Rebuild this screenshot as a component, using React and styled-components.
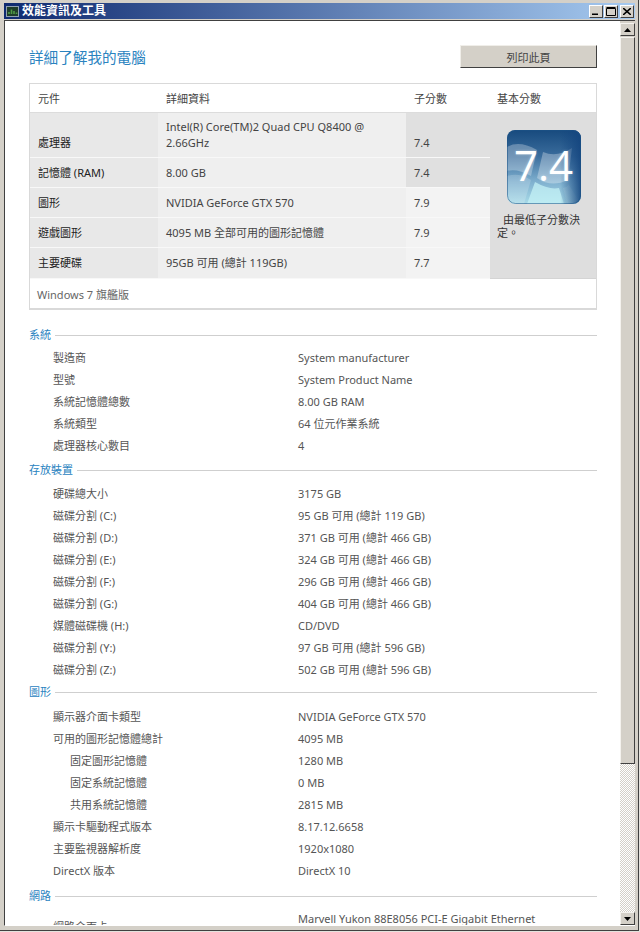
import React from 'react'
import styled, { createGlobalStyle } from 'styled-components'

const GlobalStyle = createGlobalStyle`
  html, body {
    margin: 0;
    padding: 0;
    background: #e4e2dd;
  }
  body {
    font-family: "Noto Sans", "Noto Sans CJK TC", sans-serif;
    font-size: 11px;
  }
`

const Window = styled.div`
  box-sizing: border-box;
  width: 639px;
  height: 931px;
  padding: 3px 3px 4px 4px;
  background: #d4d0c8;
  border-right: 1px solid #404040;
  border-bottom: 1px solid #404040;
  display: flex;
  flex-direction: column;
  overflow: hidden;
`

const TitleBar = styled.div`
  height: 16px;
  flex: none;
  padding: 0 1px 0 2px;
  margin-bottom: 1px;
  display: flex;
  align-items: center;
  gap: 3px;
  background: linear-gradient(90deg, #0f2a70 0%, #a6caf0 100%);
`

const Title = styled.span`
  flex: 1;
  color: #fff;
  font-size: 12px;
  font-weight: 700;
  line-height: 16px;
`

const WinButtons = styled.div`
  display: flex;
`

const WinButton = styled.button`
  box-sizing: border-box;
  width: 14px;
  height: 13px;
  padding: 0;
  margin-left: ${p => p.$gap || 0}px;
  background: #d4d0c8;
  border: 1px solid;
  border-color: #fff #404040 #404040 #fff;
  display: flex;
  align-items: center;
  justify-content: center;
`

const Main = styled.div`
  flex: 1;
  min-height: 0;
  display: flex;
  border-top: 1px solid #404040;
  border-left: 1px solid #404040;
  border-bottom: 1px solid #fff;
`

const Content = styled.div`
  flex: 1;
  min-width: 0;
  overflow: hidden;
  background: #fff;
  padding: 24px 23px 0 24px;
`

const HeaderRow = styled.div`
  display: flex;
  justify-content: space-between;
  align-items: center;
  height: 23px;
  margin-bottom: 15px;
`

const Heading = styled.h1`
  margin: 0 0 1px;
  color: #2a83bf;
  font-size: 14.6px;
  font-weight: 400;
`

const PrintButton = styled.button`
  box-sizing: border-box;
  width: 137px;
  height: 23px;
  padding: 0;
  background: #d4d0c8;
  color: #444;
  font-family: inherit;
  font-size: 11px;
  border: 1px solid;
  border-color: #f0eee9 #404040 #404040 #f0eee9;
`

const ScoreTable = styled.div`
  box-sizing: border-box;
  height: 227px;
  border: 1px solid #d9d9d9;
  border-width: 1px 1px 2px 1px;
  display: grid;
  grid-template-columns: 128px 248px 84px 1fr;
  grid-template-rows: 29px 45px 30px 30px 30px 31px 1fr;
`

const HeadCell = styled.div`
  padding-left: ${p => p.$pad || 8}px;
  display: flex;
  align-items: center;
  color: #444;
  border-bottom: 1px solid #dcdcdc;
`

const Cell = styled.div`
  box-sizing: border-box;
  padding: 0 8px;
  display: flex;
  align-items: center;
  line-height: 16px;
  color: ${p => (p.$strong ? '#222' : '#444')};
  background: ${p => p.$bg};
  border-bottom: 1px solid #f8f8f8;
`

const LabelCell = styled(Cell)`
  padding-top: ${p => p.$drop || 0}px;
`

const BaseCell = styled.div`
  grid-column: 4;
  grid-row: 2 / span 5;
  background: #dedede;
  border-bottom: 1px solid #d4d4d4;
  padding: 17px 6px 0 7px;
`

const Badge = styled.div`
  position: relative;
  width: 74px;
  height: 74px;
  margin-left: 10px;
`

const BadgeScore = styled.span`
  position: absolute;
  left: 7px;
  top: 10px;
  color: #fff;
  font-family: "Open Sans", sans-serif;
  font-weight: 400;
  font-size: 42px;
  line-height: 50px;
  text-shadow: 0 0 3px rgba(255, 255, 255, 0.35);
`

const BaseNote = styled.p`
  margin: 9px 0 0;
  color: #333;
  line-height: 13px;
  text-indent: 6px;
`

const Edition = styled.div`
  grid-column: 1 / -1;
  padding-left: 7px;
  display: flex;
  align-items: center;
  color: #666;
`

const Section = styled.section`
  margin-top: ${p => p.$top || 0}px;
`

const SectionTitle = styled.h2`
  margin: 0 0 ${p => p.$after || 5}px;
  display: flex;
  align-items: center;
  gap: 4px;
  height: 18px;
  color: #2a83bf;
  font-size: 11px;
  font-weight: 400;

  &::after {
    content: '';
    flex: 1;
    height: 1px;
    margin-top: 3px;
    background: #cfcfcf;
  }
`

const InfoRow = styled.div`
  box-sizing: border-box;
  display: grid;
  grid-template-columns: 269px 245px;
  padding: 3px 0;
  line-height: 16px;
  align-items: center;
  color: #555;
`

const InfoLabel = styled.span`
  padding-left: ${p => (p.$sub ? 41 : 24)}px;
`

const ScrollBar = styled.div`
  width: 15px;
  flex: none;
  padding-top: 2px;
  display: flex;
  flex-direction: column;
`

const ArrowButton = styled.div`
  box-sizing: border-box;
  height: 13px;
  flex: none;
  background: #d4d0c8;
  border: 1px solid;
  border-color: #f4f2ee #404040 #404040 #f4f2ee;
  display: flex;
  align-items: center;
  justify-content: center;
`

const Thumb = styled.div`
  box-sizing: border-box;
  height: 727px;
  margin-top: 1px;
  flex: none;
  background: #d4d0c8;
  border: 1px solid;
  border-color: #f4f2ee #404040 #404040 #f4f2ee;
`

const Track = styled.div`
  flex: 1;
  background-color: #fff;
  background-image: conic-gradient(#d4d0c8 25%, #fff 0 50%, #d4d0c8 0 75%, #fff 0);
  background-size: 2px 2px;
`

const AppIcon = () => (
  <svg width="13" height="11" viewBox="0 0 13 11">
    <rect x="0.5" y="0.5" width="12" height="10" fill="#1f3d2a" stroke="#8fa0b0" />
    <path d="M3 8V6M5.5 8V3.5M8 8V5M10.5 8V6.5" stroke="#4f9a45" strokeWidth="1.6" />
  </svg>
)

const Arrow = ({ up }) => (
  <svg width="7" height="4" viewBox="0 0 7 4">
    <path d={up ? 'M3.5 0L7 4H0Z' : 'M0 0H7L3.5 4Z'} fill="#000" />
  </svg>
)

const systemRows = [
  ['製造商', 'System manufacturer'],
  ['型號', 'System Product Name'],
  ['系統記憶體總數', '8.00 GB RAM'],
  ['系統類型', '64 位元作業系統'],
  ['處理器核心數目', '4'],
]

const storageRows = [
  ['硬碟總大小', '3175 GB'],
  ['磁碟分割 (C:)', '95 GB 可用 (總計 119 GB)'],
  ['磁碟分割 (D:)', '371 GB 可用 (總計 466 GB)'],
  ['磁碟分割 (E:)', '324 GB 可用 (總計 466 GB)'],
  ['磁碟分割 (F:)', '296 GB 可用 (總計 466 GB)'],
  ['磁碟分割 (G:)', '404 GB 可用 (總計 466 GB)'],
  ['媒體磁碟機 (H:)', 'CD/DVD'],
  ['磁碟分割 (Y:)', '97 GB 可用 (總計 596 GB)'],
  ['磁碟分割 (Z:)', '502 GB 可用 (總計 596 GB)'],
]

const graphicsRows = [
  ['顯示器介面卡類型', 'NVIDIA GeForce GTX 570'],
  ['可用的圖形記憶體總計', '4095 MB'],
  ['固定圖形記憶體', '1280 MB', true],
  ['固定系統記憶體', '0 MB', true],
  ['共用系統記憶體', '2815 MB', true],
  ['顯示卡驅動程式版本', '8.17.12.6658'],
  ['主要監視器解析度', '1920x1080'],
  ['DirectX 版本', 'DirectX 10'],
]

const networkRows = [
  ['網路介面卡', 'Marvell Yukon 88E8056 PCI-E Gigabit Ethernet Controller'],
]

const scores = [
  ['處理器', 'Intel(R) Core(TM)2 Quad CPU Q8400 @ 2.66GHz', '7.4', true],
  ['記憶體 (RAM)', '8.00 GB', '7.4', true],
  ['圖形', 'NVIDIA GeForce GTX 570', '7.9'],
  ['遊戲圖形', '4095 MB 全部可用的圖形記憶體', '7.9'],
  ['主要硬碟', '95GB 可用 (總計 119GB)', '7.7'],
]

const InfoSection = ({ title, rows, top, after }) => (
  <Section $top={top}>
    <SectionTitle $after={after}>{title}</SectionTitle>
    {rows.map(([label, value, sub]) => (
      <InfoRow key={label}>
        <InfoLabel $sub={sub}>{label}</InfoLabel>
        <span>{value}</span>
      </InfoRow>
    ))}
  </Section>
)

const ScoreBadge = () => (
  <Badge>
    <svg width="74" height="74" viewBox="0 0 74 74">
      <defs>
        <linearGradient id="badgeBg" x1="0" y1="0" x2="0" y2="1">
          <stop offset="0" stopColor="#174a7e" />
          <stop offset="0.35" stopColor="#3a6c9c" />
          <stop offset="0.7" stopColor="#7fb0cf" />
          <stop offset="1" stopColor="#a9dbe8" />
        </linearGradient>
        <linearGradient id="badgeEdge" x1="0" y1="0" x2="1" y2="0">
          <stop offset="0.72" stopColor="#14457f" stopOpacity="0" />
          <stop offset="1" stopColor="#14457f" stopOpacity="0.9" />
        </linearGradient>
        <clipPath id="badgeClip">
          <rect width="74" height="74" rx="8" />
        </clipPath>
      </defs>
      <g clipPath="url(#badgeClip)">
        <rect width="74" height="74" fill="url(#badgeBg)" />
        <path d="M0 17Q12 10 30 20L24 46Q10 38 0 41Z" fill="#fff" opacity="0.28" />
        <path d="M36 22Q50 28 65 18L61 50Q44 58 30 48Z" fill="#fff" opacity="0.3" />
        <path d="M0 46Q12 42 24 50L17 74H0Z" fill="#fff" opacity="0.18" />
        <path d="M28 52Q42 60 52 58L57 74H20Z" fill="#c4f2f6" opacity="0.75" />
        <path d="M56 58Q64 56 60 52L74 74H60Z" fill="#fff" opacity="0.12" />
        <rect width="74" height="74" fill="url(#badgeEdge)" />
        <rect x="0.5" y="0.5" width="73" height="73" rx="8" fill="none" stroke="#1d5487" strokeOpacity="0.55" />
      </g>
    </svg>
    <BadgeScore>7.4</BadgeScore>
  </Badge>
)

const App = () => (
  <>
    <GlobalStyle />
    <Window>
      <TitleBar>
        <AppIcon />
        <Title>效能資訊及工具</Title>
        <WinButtons>
          <WinButton aria-label="minimize">
            <svg width="8" height="8" viewBox="0 0 8 8"><path d="M0 6.5H6V8H0Z" fill="#000" /></svg>
          </WinButton>
          <WinButton aria-label="maximize" $gap={1}>
            <svg width="10" height="9" viewBox="0 0 10 9"><path d="M.5 1.5H9.5V8.5H.5ZM.5 .5H9.5" fill="none" stroke="#000" /></svg>
          </WinButton>
          <WinButton aria-label="close" $gap={2}>
            <svg width="8" height="7" viewBox="0 0 8 7"><path d="M0 0L8 7M8 0L0 7" stroke="#000" strokeWidth="1.6" /></svg>
          </WinButton>
        </WinButtons>
      </TitleBar>
      <Main>
        <Content>
          <HeaderRow>
            <Heading>詳細了解我的電腦</Heading>
            <PrintButton>列印此頁</PrintButton>
          </HeaderRow>
          <ScoreTable>
            <HeadCell>元件</HeadCell>
            <HeadCell>詳細資料</HeadCell>
            <HeadCell>子分數</HeadCell>
            <HeadCell $pad={7}>基本分數</HeadCell>
            {scores.map(([name, detail, score, low]) => (
              <React.Fragment key={name}>
                <LabelCell $strong $bg="#e8e8e8" $drop={name === '處理器' ? 16 : 0}>{name}</LabelCell>
                <Cell $bg="#efefef">{detail}</Cell>
                <LabelCell $bg={low ? '#e0e0e0' : '#f3f3f3'} $drop={name === '處理器' ? 16 : 0}>{score}</LabelCell>
              </React.Fragment>
            ))}
            <BaseCell>
              <ScoreBadge />
              <BaseNote>由最低子分數決定。</BaseNote>
            </BaseCell>
            <Edition>Windows 7 旗艦版</Edition>
          </ScoreTable>
          <InfoSection title="系統" rows={systemRows} top={15} after={4} />
          <InfoSection title="存放裝置" rows={storageRows} top={3} after={5} />
          <InfoSection title="圖形" rows={graphicsRows} top={1} after={6} />
          <InfoSection title="網路" rows={networkRows} top={4} after={4} />
        </Content>
        <ScrollBar>
          <ArrowButton><Arrow up /></ArrowButton>
          <Thumb />
          <Track />
          <ArrowButton><Arrow /></ArrowButton>
        </ScrollBar>
      </Main>
    </Window>
  </>
)

export default App
